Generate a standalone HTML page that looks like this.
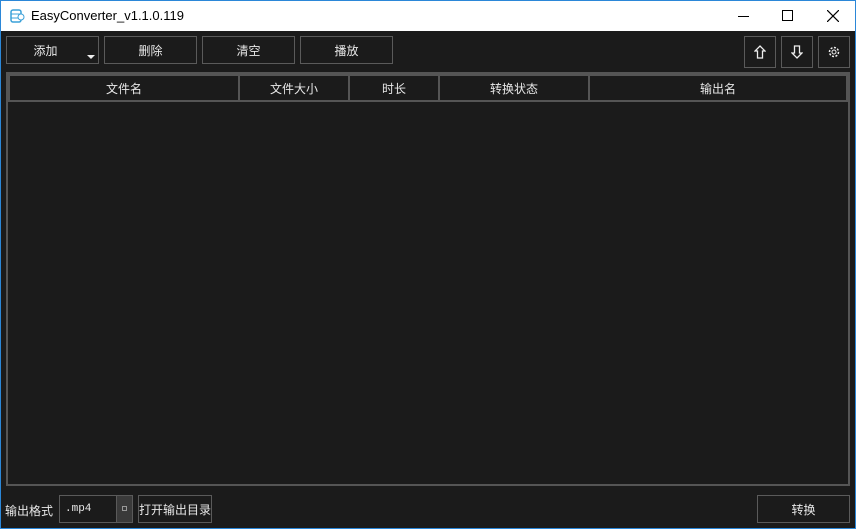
<!DOCTYPE html><html><head><meta charset="utf-8"><style>
*{box-sizing:border-box;margin:0;padding:0}
body{width:856px;height:529px;overflow:hidden;background:#1b1b1b;font-family:"Liberation Sans","Noto Sans CJK SC",sans-serif;font-size:12px;color:#e8e8e8;position:relative}
.win{position:absolute;left:0;top:0;width:856px;height:529px;border:1px solid #2b87d8;border-top:none}
.title{position:absolute;left:0;top:0;width:856px;height:31px;background:#fff;color:#000;border:1px solid #2b87d8;border-bottom:none}
.title span{position:absolute;left:30px;top:7px;font-size:13px}
.b{position:absolute;border:1px solid #5a5a5a;background:#1b1b1b;display:flex;align-items:center;justify-content:center;color:#e8e8e8;white-space:nowrap}
.tbl{position:absolute;left:6px;top:72px;width:844px;height:414px;border:2px solid #555}
.hd{position:absolute;top:0;height:28px;border:2px solid #555;display:flex;align-items:center;justify-content:center;background:#1b1b1b}
</style></head><body>
<div class="win"></div>
<div class="title">
<svg style="position:absolute;left:9px;top:8px" width="15" height="14"><rect x="1" y="1" width="10" height="12" rx="2" fill="none" stroke="#3aa0d8" stroke-width="1.5"/><line x1="1" y1="5" x2="11" y2="5" stroke="#3aa0d8"/><line x1="1" y1="9" x2="11" y2="9" stroke="#3aa0d8"/><circle cx="11" cy="8" r="3" fill="#fff" stroke="#3aa0d8"/></svg>
<span>EasyConverter_v1.1.0.119</span>
<div style="position:absolute;left:737px;top:15px;width:11px;height:1px;background:#000"></div>
<div style="position:absolute;left:781px;top:9px;width:11px;height:11px;border:1px solid #000"></div>
<svg style="position:absolute;left:826px;top:9px" width="12" height="12"><path d="M0 0L12 12M12 0L0 12" stroke="#000" stroke-width="1.2"/></svg>
</div>
<div class="b" style="left:6px;top:36px;width:93px;height:28px;padding-right:14px">添加</div>
<div style="position:absolute;left:87px;top:55px;border-left:4px solid transparent;border-right:4px solid transparent;border-top:4px solid #eee"></div>
<div class="b" style="left:104px;top:36px;width:93px;height:28px">删除</div>
<div class="b" style="left:202px;top:36px;width:93px;height:28px">清空</div>
<div class="b" style="left:300px;top:36px;width:93px;height:28px">播放</div>
<div class="b" style="left:744px;top:36px;width:32px;height:32px"><svg width="12" height="14"><path d="M6 1L11 6H8.5V13H3.5V6H1Z" fill="none" stroke="#eee" stroke-width="1.3"/></svg></div>
<div class="b" style="left:781px;top:36px;width:32px;height:32px"><svg width="12" height="14"><path d="M6 13L11 8H8.5V1H3.5V8H1Z" fill="none" stroke="#eee" stroke-width="1.3"/></svg></div>
<div class="b" style="left:818px;top:36px;width:32px;height:32px"><svg width="14" height="14"><circle cx="7" cy="7" r="4.5" fill="none" stroke="#eee" stroke-width="1.5" stroke-dasharray="2 1.5"/><circle cx="7" cy="7" r="2" fill="none" stroke="#eee"/></svg></div>
<div class="tbl">
<div class="hd" style="left:0;width:232px">文件名</div>
<div class="hd" style="left:230px;width:112px">文件大小</div>
<div class="hd" style="left:340px;width:92px">时长</div>
<div class="hd" style="left:430px;width:152px">转换状态</div>
<div class="hd" style="left:580px;width:260px">输出名</div>
</div>
<div style="position:absolute;left:5px;top:502px">输出格式</div>
<div class="b" style="left:59px;top:495px;width:74px;height:28px;justify-content:flex-start;padding-left:5px;font-family:'Liberation Mono',monospace;font-size:11px">.mp4</div>
<div style="position:absolute;left:116px;top:496px;width:16px;height:26px;background:#3a3a3a;border-left:1px solid #5a5a5a"><div style="position:absolute;left:5px;top:10px;width:5px;height:5px;border:1px solid #999"></div></div>
<div class="b" style="left:138px;top:495px;width:74px;height:28px">打开输出目录</div>
<div class="b" style="left:757px;top:495px;width:93px;height:28px">转换</div>
</body></html>
